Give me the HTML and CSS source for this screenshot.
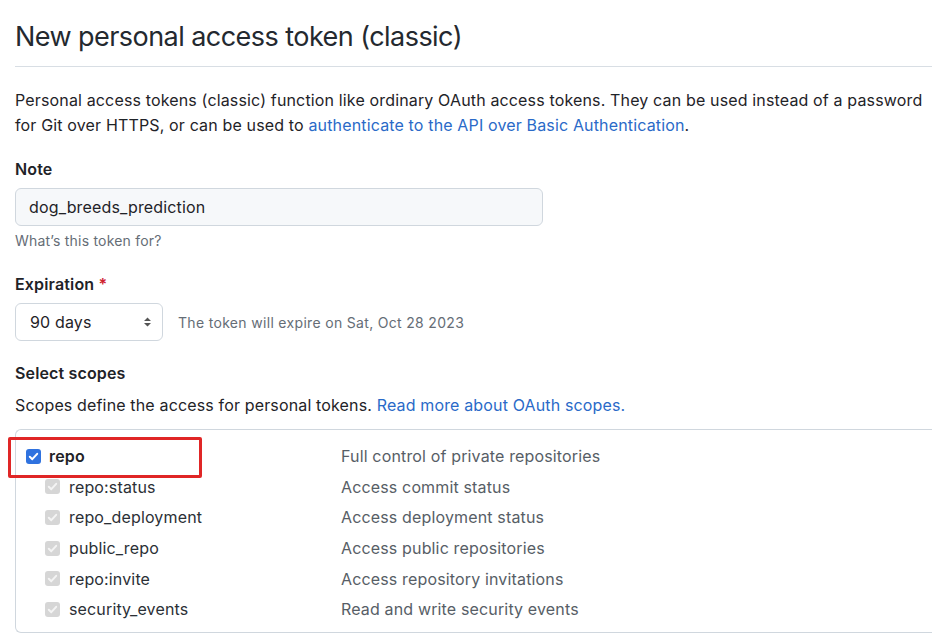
FILE: index.html
```html
<!DOCTYPE html>
<html lang="en">
<head>
<meta charset="utf-8">
<title>New personal access token (classic)</title>
<link rel="stylesheet" href="styles.css">
</head>
<body>
<div class="page">
  <div class="subhead">
    <h1 class="subhead-title">New personal access token (classic)</h1>
  </div>

  <p class="intro">Personal access tokens (classic) function like ordinary OAuth access tokens. They can be used instead of a password for Git over HTTPS, or can be used to <a class="link" href="#">authenticate to the API over Basic Authentication</a>.</p>

  <div class="field">
    <label class="label">Note</label>
    <div class="input">dog_breeds_prediction</div>
    <div class="hint">What’s this token for?</div>
  </div>

  <div class="field field-exp">
    <label class="label">Expiration <span class="req">*</span></label>
    <div class="exp-row">
      <div class="select">
        <span>90 days</span>
        <svg class="updown" width="9" height="10" viewBox="0 0 9 10"><path d="M4.5 0.5 L8 4 L1 4 Z M4.5 9.5 L8 6 L1 6 Z" fill="#555"/></svg>
      </div>
      <span class="exp-note">The token will expire on Sat, Oct 28 2023</span>
    </div>
  </div>

  <div class="field field-scopes">
    <div class="label">Select scopes</div>
    <p class="scopes-desc">Scopes define the access for personal tokens. <a class="link" href="#">Read more about OAuth scopes.</a></p>
  </div>

  <div class="scopes">
    <div class="scope-row parent">
      <div class="scope-name">
        <span class="cb cb-on"><svg width="15" height="15" viewBox="0 0 15 15"><path d="M3.8 7.8 L6.3 10.2 L11.2 4.8" fill="none" stroke="#fff" stroke-width="2" stroke-linecap="round" stroke-linejoin="round"/></svg></span>
        <span class="name-bold">repo</span>
      </div>
      <div class="scope-desc">Full control of private repositories</div>
      <div class="highlight"></div>
    </div>
    <div class="scope-row child">
      <div class="scope-name">
        <span class="cb cb-dis"><svg width="15" height="15" viewBox="0 0 15 15"><path d="M3.8 7.8 L6.3 10.2 L11.2 4.8" fill="none" stroke="#f4f4f4" stroke-width="2" stroke-linecap="round" stroke-linejoin="round"/></svg></span>
        <span>repo:status</span>
      </div>
      <div class="scope-desc">Access commit status</div>
    </div>
    <div class="scope-row child">
      <div class="scope-name">
        <span class="cb cb-dis"><svg width="15" height="15" viewBox="0 0 15 15"><path d="M3.8 7.8 L6.3 10.2 L11.2 4.8" fill="none" stroke="#f4f4f4" stroke-width="2" stroke-linecap="round" stroke-linejoin="round"/></svg></span>
        <span>repo_deployment</span>
      </div>
      <div class="scope-desc">Access deployment status</div>
    </div>
    <div class="scope-row child">
      <div class="scope-name">
        <span class="cb cb-dis"><svg width="15" height="15" viewBox="0 0 15 15"><path d="M3.8 7.8 L6.3 10.2 L11.2 4.8" fill="none" stroke="#f4f4f4" stroke-width="2" stroke-linecap="round" stroke-linejoin="round"/></svg></span>
        <span>public_repo</span>
      </div>
      <div class="scope-desc">Access public repositories</div>
    </div>
    <div class="scope-row child">
      <div class="scope-name">
        <span class="cb cb-dis"><svg width="15" height="15" viewBox="0 0 15 15"><path d="M3.8 7.8 L6.3 10.2 L11.2 4.8" fill="none" stroke="#f4f4f4" stroke-width="2" stroke-linecap="round" stroke-linejoin="round"/></svg></span>
        <span>repo:invite</span>
      </div>
      <div class="scope-desc">Access repository invitations</div>
    </div>
    <div class="scope-row child">
      <div class="scope-name">
        <span class="cb cb-dis"><svg width="15" height="15" viewBox="0 0 15 15"><path d="M3.8 7.8 L6.3 10.2 L11.2 4.8" fill="none" stroke="#f4f4f4" stroke-width="2" stroke-linecap="round" stroke-linejoin="round"/></svg></span>
        <span>security_events</span>
      </div>
      <div class="scope-desc">Read and write security events</div>
    </div>
  </div>
</div>
</body>
</html>
```
FILE: styles.css
```css
html, body {
  margin: 0;
  padding: 0;
  background: #ffffff;
  overflow: hidden;
}

body {
  font-family: Inter, "Liberation Sans", Arial, sans-serif;
  color: #1f2328;
  font-size: 16px;
  letter-spacing: 0.15px;
}

.page {
  width: 960px;
  padding-left: 15px;
}

.subhead {
  padding-top: 19px;
  padding-bottom: 12px;
  border-bottom: 1px solid #d8dee4;
}

.subhead-title {
  margin: 0;
  font-size: 27px;
  font-weight: 400;
  line-height: 35px;
  letter-spacing: -0.55px;
  color: #24292f;
}

.intro {
  margin: 21px 0 0;
  width: 912px;
  line-height: 25px;
  font-size: 16px;
}

.link {
  color: #2a6ac8;
  text-decoration: none;
}

.field {
  margin-top: 19px;
  display: flex;
  flex-direction: column;
}

.field-exp {
  margin-top: 21px;
}

.field-scopes {
  margin-top: 20px;
}

.label {
  font-weight: 600;
  font-size: 16px;
  line-height: 24px;
  color: #1f2328;
}

.req {
  color: #cf222e;
}

.input {
  margin-top: 7px;
  box-sizing: border-box;
  width: 528px;
  height: 38px;
  padding: 0 13px;
  display: flex;
  align-items: center;
  background: #f6f8fa;
  border: 1px solid #d0d7de;
  border-radius: 6px;
  font-size: 16px;
  color: #1f2328;
}

.hint {
  margin-top: 5px;
  font-size: 14px;
  line-height: 20px;
  letter-spacing: 0.2px;
  color: #656d76;
}

.exp-row {
  margin-top: 7px;
  display: flex;
  align-items: center;
  gap: 15px;
}

.select {
  box-sizing: border-box;
  width: 148px;
  height: 38px;
  padding: 0 10px 0 14px;
  display: flex;
  align-items: center;
  justify-content: space-between;
  background: #ffffff;
  border: 1px solid #d0d7de;
  border-radius: 6px;
  font-size: 16px;
}

.updown {
  display: block;
}

.exp-note {
  font-size: 14px;
  letter-spacing: 0.32px;
  color: #656d76;
}

.scopes-desc {
  margin: 8px 0 0;
  line-height: 25px;
  font-size: 16px;
}

.scopes {
  margin-top: 11px;
  border: 1px solid #d0d7de;
  border-right: none;
  border-radius: 6px 0 0 6px;
  padding: 11px 0 7px;
}

.scope-row {
  position: relative;
  height: 30.6px;
  display: grid;
  grid-template-columns: 315px 1fr;
  align-items: center;
  padding-left: 10px;
}

.scope-name {
  display: flex;
  align-items: center;
  gap: 8px;
  color: #2b3036;
}

.child .scope-name {
  padding-left: 19px;
  gap: 9px;
}

.name-bold {
  font-weight: 600;
  color: #1f2328;
}

.scope-desc {
  color: #575e66;
}

.cb {
  width: 15px;
  height: 15px;
  border-radius: 3px;
  display: block;
  flex: none;
}

.cb svg {
  display: block;
}

.cb-on {
  background: #2f72df;
}

.cb-dis {
  background: #d6d6d6;
}

.highlight {
  position: absolute;
  left: -8px;
  top: -4px;
  width: 194px;
  height: 41px;
  box-sizing: border-box;
  border: 3px solid #e02626;
  border-radius: 2px;
}
```
